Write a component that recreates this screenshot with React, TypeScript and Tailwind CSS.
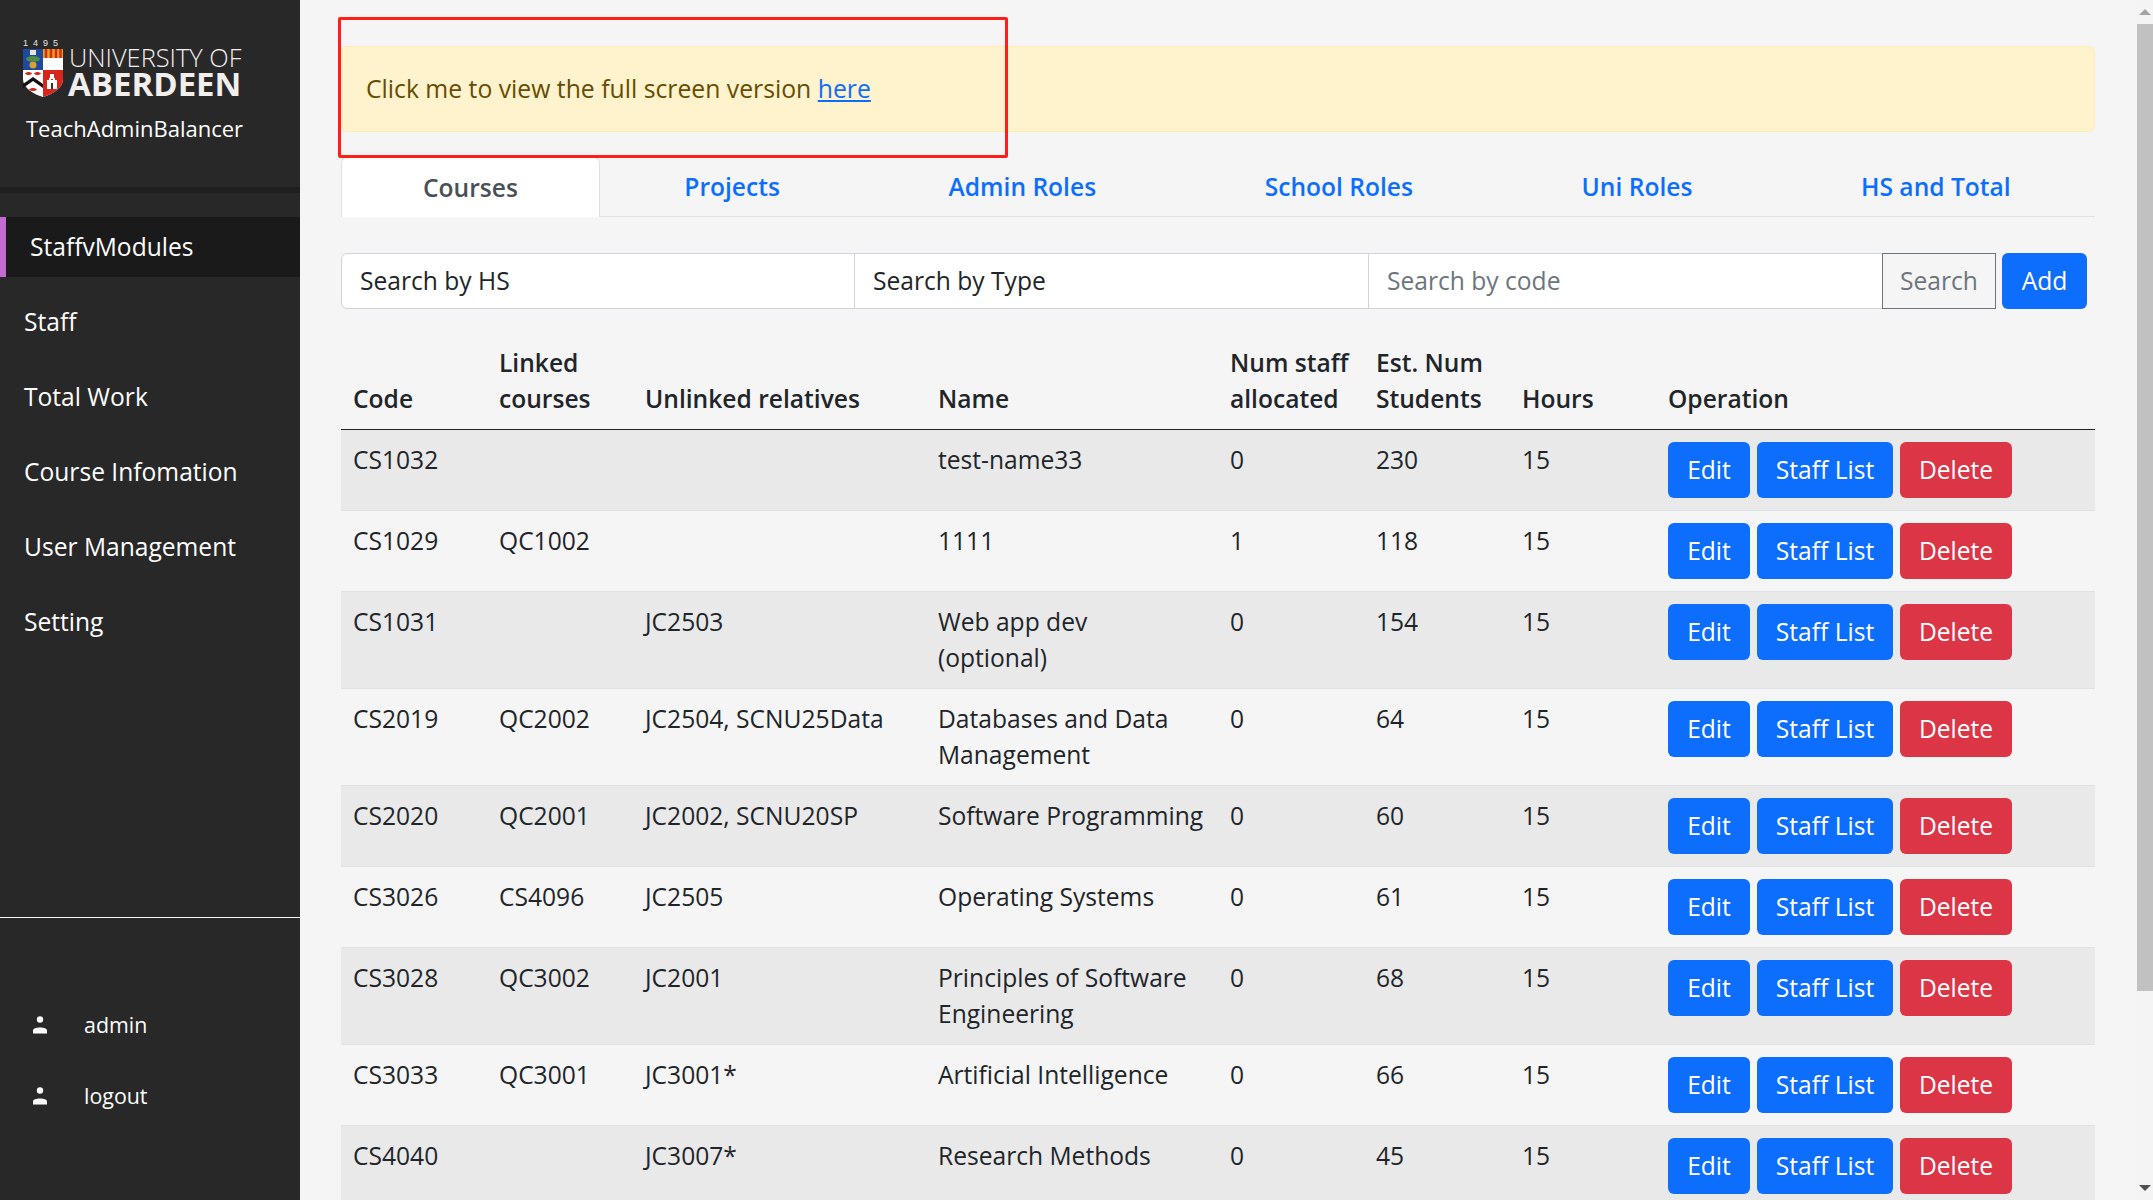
const rows = [
  { code: "CS1032", linked: "", unlinked: "", name: "test-name33", staff: "0", students: "230", hours: "15" },
  { code: "CS1029", linked: "QC1002", unlinked: "", name: "1111", staff: "1", students: "118", hours: "15" },
  { code: "CS1031", linked: "", unlinked: "JC2503", name: "Web app dev\n(optional)", staff: "0", students: "154", hours: "15" },
  { code: "CS2019", linked: "QC2002", unlinked: "JC2504, SCNU25Data", name: "Databases and Data Management", staff: "0", students: "64", hours: "15" },
  { code: "CS2020", linked: "QC2001", unlinked: "JC2002, SCNU20SP", name: "Software Programming", staff: "0", students: "60", hours: "15" },
  { code: "CS3026", linked: "CS4096", unlinked: "JC2505", name: "Operating Systems", staff: "0", students: "61", hours: "15" },
  { code: "CS3028", linked: "QC3002", unlinked: "JC2001", name: "Principles of Software Engineering", staff: "0", students: "68", hours: "15" },
  { code: "CS3033", linked: "QC3001", unlinked: "JC3001*", name: "Artificial Intelligence", staff: "0", students: "66", hours: "15" },
  { code: "CS4040", linked: "", unlinked: "JC3007*", name: "Research Methods", staff: "0", students: "45", hours: "15" },
];

const navItems = ["Staff", "Total Work", "Course Infomation", "User Management", "Setting"];
const tabs = ["Projects", "Admin Roles", "School Roles", "Uni Roles", "HS and Total"];

function Shield() {
  return (
    <svg width="42" height="50" viewBox="0 0 42 50" className="block">
      <path d="M1 1H41V31C41 40 31 46 21 49C11 46 1 40 1 31Z" fill="#ffffff" />
      <rect x="1" y="1" width="20" height="21" fill="#1d4a9c" />
      <rect x="21" y="1" width="20" height="9" fill="#e8a020" />
      <path d="M24 1V10M29 1V10M34 1V10M38.500 1V10" stroke="#d42a1e" strokeWidth="2.500" />
      <path d="M21 22H41V31C41 40 31 46 21 49Z" fill="#d9261c" />
      <path d="M25 41V32H27V30H29V32H31V30H33V32H35V41Z" fill="#ffffff" />
      <rect x="28" y="26" width="4" height="5" fill="#ffffff" />
      <rect x="29" y="35" width="2" height="6" fill="#333333" />
      <circle cx="11" cy="17" r="3.500" fill="#d8a030" />
      <ellipse cx="11" cy="11" rx="7" ry="3" fill="#4f8a48" />
      <rect x="8" y="2" width="6" height="5" fill="#e8e4d8" />
      <path d="M3 25.500C5 23.500 8 23.500 10 25.500C8 27.500 5 27.500 3 25.500ZM12 25.500C14 23.500 17 23.500 19 25.500C17 27.500 14 27.500 12 25.500Z" fill="#d9261c" />
      <path d="M1 36L11 29L21 36V40L11 33L1 40Z" fill="#111111" />
      <path d="M7 41.500C9 39.500 13 39.500 15 41.500C13 43.500 9 43.500 7 41.500Z" fill="#d9261c" />
    </svg>
  );
}

function UserIcon() {
  return (
    <svg width="14" height="18" viewBox="0 0 14 18" className="block shrink-0">
      <circle cx="7" cy="3.500" r="3.200" fill="#ffffff" />
      <path d="M0 17.500V14.500C0 12.500 3 11.500 7 11.500C11 11.500 14 12.500 14 14.500V17.500Z" fill="#ffffff" />
    </svg>
  );
}

function Btn({ label, width, color }: { label: string; width: string; color: string }) {
  return (
    <button className={`${width} ${color} h-14 shrink-0 rounded-[6px] text-white`}>{label}</button>
  );
}

export default function App() {
  return (
    <div className="flex h-screen w-full overflow-hidden bg-[#f5f5f5] font-['Open_Sans','Liberation_Sans',sans-serif] text-[24.6px] leading-9 text-[#212529]">
      {/* sidebar */}
      <aside className="flex w-[300px] shrink-0 flex-col bg-[#282828] text-[#fdfdfd]">
        <div className="h-[187px] shrink-0 pl-[22px] pt-[39px]">
          <div className="flex items-start gap-[4px]">
            <div className="flex flex-col items-center">
              <span className="h-[9px] font-['Liberation_Sans',sans-serif] text-[9px] leading-[9px] tracking-[5px] text-[#e6e6e6]">1495</span>
              <Shield />
            </div>
            <div className="flex flex-col pt-[6px] text-[#f3eeee]">
              <span className="h-[24px] pl-[1px] text-[25.4px] leading-[24px] font-light whitespace-nowrap">UNIVERSITY OF</span>
              <span className="h-[30px] text-[33px] leading-[30px] font-bold whitespace-nowrap">ABERDEEN</span>
            </div>
          </div>
          <div className="mt-[11px] pl-[4px] text-[22px] leading-9 whitespace-nowrap">TeachAdminBalancer</div>
        </div>
        <div className="h-[6px] shrink-0 bg-[#1f1f1f]" />
        <nav className="h-[725px] shrink-0 border-b border-[#f5f5f5] pt-[24px]">
          <div className="flex h-[60px] items-center border-l-[6px] border-[#c36bd1] bg-[#1a1a1a] pl-[24px]">StaffvModules</div>
          <div className="mt-[15px] flex flex-col gap-[15px]">
            {navItems.map((item) => (
              <div key={item} className="flex h-[60px] items-center pl-[24px]">{item}</div>
            ))}
          </div>
        </nav>
        <div className="flex flex-col gap-[41px] pl-[33px] pt-[92px] text-[21.4px] leading-[30px]">
          <div className="flex items-center gap-[37px]"><UserIcon />admin</div>
          <div className="flex items-center gap-[37px]"><UserIcon />logout</div>
        </div>
      </aside>

      {/* main */}
      <main className="relative min-w-0 flex-1 overflow-hidden pl-[41px] pr-[41px] pt-[46px]">
        <div className="flex h-[86px] items-center rounded-[6px] border border-[#ffecb5] bg-[#fff3cd] pl-[24px] text-[24.75px] text-[#664d03]">
          <span>Click me to view the full screen version <a className="text-[#0d6efd] underline">here</a></span>
        </div>
        <div className="absolute left-[38px] top-[17px] h-[141px] w-[670px] rounded-[2px] border-[3px] border-[#ff1f17]" />

        <div className="mt-[25px] flex h-[60px] border-b border-[#dee2e6] font-semibold text-[#0d6efd]">
          <div className="flex h-[60px] w-[259px] shrink-0 items-center justify-center rounded-t-[6px] border border-b-0 border-[#dee2e6] bg-white text-[#495057]">Courses</div>
          {tabs.map((tab) => (
            <div key={tab} className="flex h-[59px] flex-auto items-center justify-center px-[80px] whitespace-nowrap">{tab}</div>
          ))}
        </div>

        <div className="mt-[36px] flex h-14 w-[1746px] gap-[6px]">
          <div className="flex w-[1655px] overflow-hidden">
            <div className="flex w-[514px] items-center rounded-l-[6px] border border-[#ced4da] bg-white pl-[18px]">Search by HS</div>
            <div className="-ml-px flex w-[515px] items-center border border-[#ced4da] bg-white pl-[18px]">Search by Type</div>
            <div className="-ml-px flex w-[515px] items-center border border-[#ced4da] bg-white pl-[18px] text-[#6c757d]">Search by code</div>
            <div className="-ml-px flex w-[114px] items-center justify-center border border-[#6c757d] text-[#6c757d]">Search</div>
          </div>
          <button className="h-14 w-[85px] rounded-[6px] bg-[#0d6efd] text-white">Add</button>
        </div>

        <table className="mt-[24px] w-[1754px] table-fixed border-collapse text-left">
          <colgroup>
            <col className="w-[146px]" />
            <col className="w-[146px]" />
            <col className="w-[293px]" />
            <col className="w-[292px]" />
            <col className="w-[146px]" />
            <col className="w-[146px]" />
            <col className="w-[146px]" />
            <col className="w-[439px]" />
          </colgroup>
          <thead>
            <tr className="border-b border-[#212529] align-bottom">
              <th className="p-3 font-semibold">Code</th>
              <th className="p-3 font-semibold">Linked courses</th>
              <th className="p-3 font-semibold">Unlinked relatives</th>
              <th className="p-3 font-semibold">Name</th>
              <th className="p-3 font-semibold">Num staff allocated</th>
              <th className="p-3 font-semibold">Est. Num Students</th>
              <th className="p-3 font-semibold">Hours</th>
              <th className="p-3 font-semibold">Operation</th>
            </tr>
          </thead>
          <tbody>
            {rows.map((row, i) => (
              <tr key={row.code} className={`border-b border-[#dee2e6] align-top ${i % 2 === 0 ? "bg-[#e9e9e9]" : "bg-[#f5f5f5]"}`}>
                <td className="p-3">{row.code}</td>
                <td className="p-3">{row.linked}</td>
                <td className="p-3 whitespace-nowrap">{row.unlinked}</td>
                <td className="p-3 whitespace-pre-line">{row.name}</td>
                <td className="p-3">{row.staff}</td>
                <td className="p-3">{row.students}</td>
                <td className="p-3">{row.hours}</td>
                <td className="p-3">
                  <div className="flex gap-[7px]">
                    <Btn label="Edit" width="w-[82px]" color="bg-[#0d6efd]" />
                    <Btn label="Staff List" width="w-[136px]" color="bg-[#0d6efd]" />
                    <Btn label="Delete" width="w-[112px]" color="bg-[#dc3545]" />
                  </div>
                </td>
              </tr>
            ))}
          </tbody>
        </table>
      </main>

      {/* scrollbar */}
      <div className="flex w-[17px] shrink-0 flex-col items-center bg-[#f4f4f4]">
        <div className="flex h-6 items-center justify-center">
          <div className="h-0 w-0 border-x-[6px] border-b-[6px] border-x-transparent border-b-[#a3a3a3]" />
        </div>
        <div className="h-[967px] w-[16px] self-end bg-[#c1c1c1]" />
        <div className="flex-1" />
        <div className="flex h-6 items-center justify-center">
          <div className="h-0 w-0 border-x-[6px] border-t-[6px] border-x-transparent border-t-[#505050]" />
        </div>
      </div>
    </div>
  );
}
